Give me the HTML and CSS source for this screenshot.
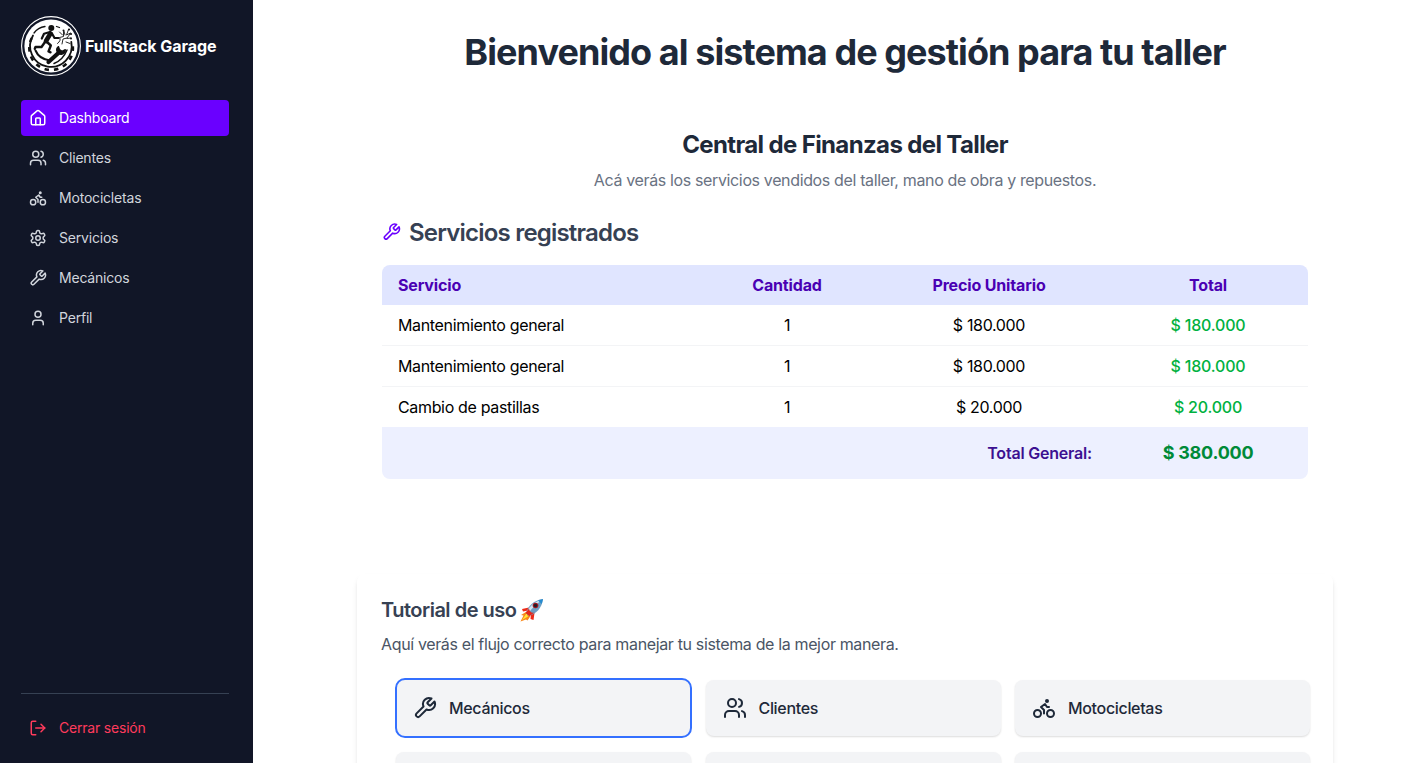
FILE: index.html
```html
<!DOCTYPE html>
<html lang="es">
<head>
<meta charset="utf-8">
<title>FullStack Garage</title>
<link rel="stylesheet" href="styles.css">
</head>
<body>
<svg class="sprite" width="0" height="0" aria-hidden="true">
  <symbol id="house" viewBox="0 0 24 24"><path d="M15 21v-8a1 1 0 0 0-1-1h-4a1 1 0 0 0-1 1v8"/><path d="M3 10a2 2 0 0 1 .709-1.528l7-5.999a2 2 0 0 1 2.582 0l7 5.999A2 2 0 0 1 21 10v9a2 2 0 0 1-2 2H5a2 2 0 0 1-2-2z"/></symbol>
  <symbol id="users" viewBox="0 0 24 24"><path d="M16 21v-2a4 4 0 0 0-4-4H6a4 4 0 0 0-4 4v2"/><path d="M16 3.128a4 4 0 0 1 0 7.744"/><path d="M22 21v-2a4 4 0 0 0-3-3.87"/><circle cx="9" cy="7" r="4"/></symbol>
  <symbol id="bike" viewBox="0 0 24 24"><circle cx="18.5" cy="17.5" r="3.5"/><circle cx="5.5" cy="17.5" r="3.5"/><circle cx="15" cy="5" r="1"/><path d="M12 17.5V14l-3-3 4-3 2 3h2"/></symbol>
  <symbol id="settings" viewBox="0 0 24 24"><path d="M12.22 2h-.44a2 2 0 0 0-2 2v.18a2 2 0 0 1-1 1.73l-.43.25a2 2 0 0 1-2 0l-.15-.08a2 2 0 0 0-2.73.73l-.22.38a2 2 0 0 0 .73 2.73l.15.1a2 2 0 0 1 1 1.72v.51a2 2 0 0 1-1 1.74l-.15.09a2 2 0 0 0-.73 2.73l.22.38a2 2 0 0 0 2.73.73l.15-.08a2 2 0 0 1 2 0l.43.25a2 2 0 0 1 1 1.73V20a2 2 0 0 0 2 2h.44a2 2 0 0 0 2-2v-.18a2 2 0 0 1 1-1.73l.43-.25a2 2 0 0 1 2 0l.15.08a2 2 0 0 0 2.73-.73l.22-.39a2 2 0 0 0-.73-2.73l-.15-.08a2 2 0 0 1-1-1.74v-.5a2 2 0 0 1 1-1.74l.15-.09a2 2 0 0 0 .73-2.73l-.22-.38a2 2 0 0 0-2.73-.73l-.15.08a2 2 0 0 1-2 0l-.43-.25a2 2 0 0 1-1-1.73V4a2 2 0 0 0-2-2z"/><circle cx="12" cy="12" r="3"/></symbol>
  <symbol id="wrench" viewBox="0 0 24 24"><path d="M14.7 6.3a1 1 0 0 0 0 1.4l1.6 1.6a1 1 0 0 0 1.4 0l3.77-3.77a6 6 0 0 1-7.94 7.94l-6.91 6.91a2.12 2.12 0 0 1-3-3l6.91-6.91a6 6 0 0 1 7.94-7.94l-3.76 3.76z"/></symbol>
  <symbol id="user" viewBox="0 0 24 24"><path d="M19 21v-2a4 4 0 0 0-4-4H9a4 4 0 0 0-4 4v2"/><circle cx="12" cy="7" r="4"/></symbol>
  <symbol id="logout" viewBox="0 0 24 24"><path d="M9 21H5a2 2 0 0 1-2-2V5a2 2 0 0 1 2-2h4"/><path d="m16 17 5-5-5-5"/><path d="M21 12H9"/></symbol>
</svg>
<div class="app">
  <aside class="sidebar">
    <div class="brand">
      <svg class="logo" viewBox="0 0 60 60" aria-hidden="true">
        <circle cx="30" cy="30" r="29.4" fill="none" stroke="#fff" stroke-width="1.1"/>
        <circle cx="30" cy="30" r="26.6" fill="#fff"/>
        <g fill="none" stroke="#111" stroke-linecap="round" stroke-linejoin="round">
          <path d="M12 19.500A20.800 20.800 0 1 0 50.300 26" stroke-width="1.800"/>
          <path d="M10.800 22A21.800 21.800 0 1 0 51.500 28" stroke-width="2.600" stroke-dasharray="4.500 5" stroke-linecap="butt"/>
          <path d="M13 17Q17 11.500 24 10.500M35.500 10.500l3 1" stroke-width="1.300"/>
          <path d="M14.500 34.500Q18 43 29 44.500" stroke-width="2"/>
          <path d="M29.500 17.500 25 25" stroke-width="4.600"/>
          <path d="M29 16 23 17.800 20.800 22.500M31 17.500 33.500 22 37.500 22" stroke-width="2.200"/>
          <path d="M25.500 25.500 29.800 29.500 27.500 35.500 29.500 36.300M24 26 20.500 31 14.500 31 13.800 32.800" stroke-width="2.400"/>
          <path d="M27.500 46 38.500 36" stroke-width="4.200"/>
          <path d="M37.500 30.500A4.300 4.300 0 1 0 44.300 33.500L41 35.200 38.500 33.500z" fill="#111" stroke-width="1.200"/>
          <path d="M33 47.500Q42 44 46 34" stroke-width="1.500"/>
          <path d="M36.500 27.500q4-3 2-6l4-1 0-5M41 28l1-5 4-1 3-4M38.500 16l3 3M47.500 13.500l-2 5.500 4-2M45 26l4 1.500M46 22.500l4-.5M43 15l1 4" stroke-width=".9"/>
        </g>
        <g fill="#111">
          <circle cx="30.300" cy="12" r="3"/>
          <circle cx="48" cy="13.500" r="1.100"/>
          <circle cx="50" cy="18" r="1.100"/>
          <circle cx="42.500" cy="14.500" r="1"/>
          <circle cx="50" cy="22.500" r="1"/>
        </g>
      </svg>
      <span class="brand-name">FullStack Garage</span>
    </div>
    <nav class="nav">
      <a class="nav-link active"><svg class="icon"><use href="#house"/></svg><span>Dashboard</span></a>
      <a class="nav-link"><svg class="icon"><use href="#users"/></svg><span>Clientes</span></a>
      <a class="nav-link"><svg class="icon"><use href="#bike"/></svg><span>Motocicletas</span></a>
      <a class="nav-link"><svg class="icon"><use href="#settings"/></svg><span>Servicios</span></a>
      <a class="nav-link"><svg class="icon"><use href="#wrench"/></svg><span>Mecánicos</span></a>
      <a class="nav-link"><svg class="icon"><use href="#user"/></svg><span>Perfil</span></a>
    </nav>
    <div class="session">
      <a class="nav-link logout"><svg class="icon"><use href="#logout"/></svg><span>Cerrar sesión</span></a>
    </div>
  </aside>
  <main class="main">
    <h1 class="title">Bienvenido al sistema de gestión para tu taller</h1>
    <section class="finance">
      <h2 class="finance-title">Central de Finanzas del Taller</h2>
      <p class="finance-text">Acá verás los servicios vendidos del taller, mano de obra y repuestos.</p>
      <h3 class="services-title"><svg class="icon"><use href="#wrench"/></svg><span>Servicios registrados</span></h3>
      <table class="services">
        <colgroup><col class="c1"><col class="c2"><col class="c3"><col class="c4"></colgroup>
        <thead><tr><th>Servicio</th><th>Cantidad</th><th>Precio Unitario</th><th>Total</th></tr></thead>
        <tbody>
          <tr><td>Mantenimiento general</td><td>1</td><td>$ 180.000</td><td class="amount">$ 180.000</td></tr>
          <tr><td>Mantenimiento general</td><td>1</td><td>$ 180.000</td><td class="amount">$ 180.000</td></tr>
          <tr><td>Cambio de pastillas</td><td>1</td><td>$ 20.000</td><td class="amount">$ 20.000</td></tr>
        </tbody>
        <tfoot><tr><td colspan="3" class="sum-label">Total General:</td><td class="sum">$ 380.000</td></tr></tfoot>
      </table>
    </section>
    <section class="tutorial">
      <h3 class="tutorial-title"><span>Tutorial de uso</span>
        <svg class="rocket" viewBox="0 0 24 24" aria-hidden="true">
          <path d="M9 9.500 2 11l1 2.500 5-1zM14.500 15l-1 7-3-1 .5-6z" fill="#f02a17"/>
          <path d="M6 14 1 17l2.500.5L.5 23.500 6 21.500l1.500 1 3-4.500z" fill="#f9881a"/>
          <path d="M6.500 15.500 2 22l6-3.500z" fill="#ffe63b"/>
          <path d="M6 15C8 8 14 2 23 1c-1 9-7 15-14 17z" fill="#6d9fc4"/>
          <path d="M7 13.500C10 8 15 3 22 2 18 5 12 10 8.500 15z" fill="#cfe6f2"/>
          <path d="M18 2.500 23 1l-1.300 5z" fill="#258bd0"/>
          <path d="m9 10.500-3.500 4.500 4 3 5-3.500c-3 1-5-1-5.500-4z" fill="#e5281c"/>
          <circle cx="15.500" cy="7.500" r="2.800" fill="#a5161f"/>
          <circle cx="15.500" cy="7.500" r="1.700" fill="#1b1f2b"/>
        </svg>
      </h3>
      <p class="tutorial-text">Aquí verás el flujo correcto para manejar tu sistema de la mejor manera.</p>
      <div class="steps">
        <div class="step selected"><svg class="icon"><use href="#wrench"/></svg><span>Mecánicos</span></div>
        <div class="step"><svg class="icon"><use href="#users"/></svg><span>Clientes</span></div>
        <div class="step"><svg class="icon"><use href="#bike"/></svg><span>Motocicletas</span></div>
        <div class="step"></div>
        <div class="step"></div>
        <div class="step"></div>
      </div>
    </section>
  </main>
</div>
</body>
</html>
```

FILE: styles.css
```css
* { box-sizing: border-box; }
body {
  margin: 0;
  font-family: Inter, "Liberation Sans", sans-serif;
  font-size: 16px;
  line-height: 24px;
  color: #000;
  background: #fff;
}
h1, h2, h3, p { margin: 0; }
.sprite { display: block; }
.app { display: flex; height: 763px; overflow: hidden; }
.icon {
  width: 18px;
  height: 18px;
  flex: none;
  fill: none;
  stroke: currentColor;
  stroke-width: 2;
  stroke-linecap: round;
  stroke-linejoin: round;
}

/* Sidebar */
.sidebar {
  display: flex;
  flex-direction: column;
  flex: none;
  width: 253px;
  padding: 16px 24px 17px 21px;
  background: #111627;
}
.brand { display: flex; align-items: center; gap: 4px; height: 60px; }
.logo { width: 60px; height: 60px; flex: none; }
.brand-name { color: #fff; font-weight: 700; white-space: nowrap; letter-spacing: -0.04px; }
.nav { display: flex; flex-direction: column; gap: 4px; margin-top: 24px; }
.nav-link {
  display: flex;
  align-items: center;
  gap: 12px;
  height: 36px;
  padding: 0 8px;
  border-radius: 4px;
  color: #d1d5dc;
  font-size: 14px;
  line-height: 20px;
  letter-spacing: -0.2px;
}
.nav-link.active { background: #6a00ff; color: #fff; }
.session { margin-top: auto; padding-top: 16px; border-top: 1px solid #364153; }
.nav-link.logout { color: #ff3b5c; }

/* Main column */
.main { flex: 1; padding: 32px 88px 0 104px; }
.title {
  text-align: center;
  font-size: 36px;
  line-height: 40px;
  color: #1e2939;
  white-space: nowrap;
  letter-spacing: -0.93px;
}
.finance { padding: 57px 25px 0; }
.finance-title { text-align: center; font-size: 24px; line-height: 32px; color: #1e2939; letter-spacing: -0.63px; }
.finance-text { margin-top: 7px; text-align: center; color: #6a7282; letter-spacing: -0.36px; }
.services-title {
  display: flex;
  align-items: center;
  gap: 8px;
  margin-top: 25px;
  font-size: 24px;
  font-weight: 600;
  line-height: 32px;
  color: #364153;
  letter-spacing: -0.8px;
}
.services-title .icon { width: 19px; height: 20px; margin-top: -2px; color: #6a00ff; }
.services {
  width: 926px;
  margin-top: 16px;
  border-spacing: 0;
  border-radius: 8px;
  overflow: hidden;
  table-layout: fixed;
  text-align: center;
  letter-spacing: -0.34px;
}
.c1 { width: 322px; }
.c2 { width: 166px; }
.c3 { width: 238px; }
.c4 { width: 200px; }
.services th, .services td { padding: 8px 16px; }
.services th { background: #e0e5ff; color: #4a00b3; font-weight: 700; letter-spacing: -0.15px; }
.services th:first-child, .services tbody td:first-child { text-align: left; }
.services tbody tr:not(:last-child) td { border-bottom: 1px solid #f3f4f6; }
.services .amount { color: #00b140; font-weight: 500; letter-spacing: -0.2px; }
.services tfoot td { height: 52px; background: #edf0ff; }
.services .sum-label { text-align: right; color: #3c1091; font-weight: 600; letter-spacing: -0.2px; }
.services .sum { color: #008a38; font-size: 18px; font-weight: 700; letter-spacing: -0.25px; }

/* Tutorial */
.tutorial {
  height: 330px;
  margin-top: 95px;
  padding: 22px 23px 0 24px;
  border-radius: 8px;
  box-shadow: 0 4px 6px -1px rgba(0, 0, 0, .1), 0 2px 4px -2px rgba(0, 0, 0, .1);
}
.tutorial-title {
  display: flex;
  align-items: center;
  gap: 4px;
  font-size: 20px;
  font-weight: 600;
  line-height: 28px;
  color: #364153;
  letter-spacing: -0.5px;
}
.rocket { width: 24px; height: 24px; }
.tutorial-text { margin-top: 8px; color: #4a5565; letter-spacing: -0.355px; }
.steps {
  display: grid;
  grid-template-columns: repeat(3, 1fr);
  grid-auto-rows: 56px;
  gap: 16px 14.5px;
  padding-left: 15px;
  margin-top: 24px;
}
.step {
  display: flex;
  align-items: center;
  gap: 12px;
  padding: 0 17px;
  border-radius: 8px;
  background: #f3f4f6;
  box-shadow: 0 1px 2px rgba(0, 0, 0, .14);
  color: #1e2939;
  font-weight: 500;
  letter-spacing: -0.33px;
}
.step .icon { width: 24px; height: 24px; }
.step.selected { margin: -2px -1px; padding: 0 16px; border: 2px solid #3470ff; border-radius: 10px; box-shadow: none; }
```
